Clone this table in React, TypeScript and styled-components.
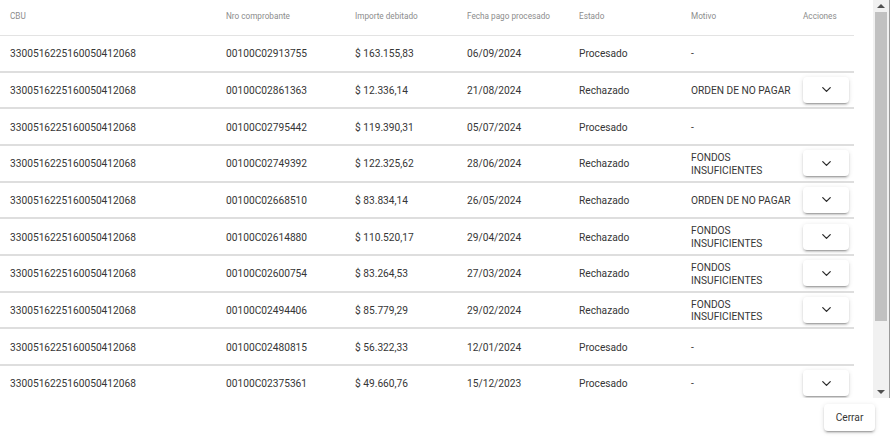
import React from 'react'
import styled, { createGlobalStyle } from 'styled-components'
import { ChevronDown } from 'lucide-react'

const GlobalStyle = createGlobalStyle`
  html, body {
    margin: 0;
    padding: 0;
    background: #fff;
  }

  body {
    font-family: Roboto, 'Liberation Sans', sans-serif;
  }
`

const Dialog = styled.div`
  width: 890px;
  height: 442px;
  display: flex;
  flex-direction: column;
  background: #fff;
  overflow: hidden;
`

const ScrollArea = styled.div`
  height: 398px;
  display: flex;
`

const TableWrap = styled.div`
  flex: 1;
  overflow: hidden;
`

const Table = styled.table`
  width: 854px;
  table-layout: fixed;
  border-collapse: separate;
  border-spacing: 0;
  color: #363636;
  font-size: 10.2px;
`

const HeadCell = styled.th<{ $w: number }>`
  box-sizing: border-box;
  width: ${({ $w }) => $w}px;
  height: 36px;
  padding: 0 0 3px 10px;
  text-align: left;
  font-weight: 400;
  font-size: 8.2px;
  color: #8c8c8c;
  border-bottom: 1px solid #e3e3e3;
  vertical-align: middle;
  white-space: nowrap;
`

const Cell = styled.td`
  box-sizing: border-box;
  height: 36.67px;
  padding: 3px 0 0 10px;
  line-height: 1.25;
  border-bottom: 2px solid #dedede;
  vertical-align: middle;
`

const ActionButton = styled.button`
  display: flex;
  align-items: center;
  justify-content: center;
  width: 46px;
  height: 26px;
  margin-top: -3px;
  padding: 0;
  border: 0;
  border-radius: 4px;
  background: #fff;
  color: #2a2a2a;
  cursor: pointer;
  box-shadow: 0px 3px 1px -2px rgba(0, 0, 0, 0.2),
    0px 2px 2px 0px rgba(0, 0, 0, 0.14), 0px 1px 5px 0px rgba(0, 0, 0, 0.12);
`

const ScrollTrack = styled.div`
  width: 16px;
  display: flex;
  flex-direction: column;
  background: #f1f1f1;
  border-right: 1px solid #9a9a9a;
`

const ArrowButton = styled.div<{ $up?: boolean }>`
  height: 12px;
  display: flex;
  align-items: center;
  justify-content: center;

  &::after {
    content: '';
    border-left: 4px solid transparent;
    border-right: 4px solid transparent;
    ${({ $up }) =>
      $up ? 'border-bottom: 4px solid #505050;' : 'border-top: 4px solid #505050;'}
  }
`

const Thumb = styled.div`
  height: 309px;
  margin: 0 2px;
  background: #c1c1c1;
`

const TrackRest = styled.div`
  flex: 1;
`

const Footer = styled.div`
  flex: 1;
  display: flex;
  justify-content: flex-end;
  align-items: flex-start;
  padding: 6px 15px 0 0;
`

const CloseButton = styled.button`
  width: 51px;
  height: 27px;
  border: 0;
  border-radius: 4px;
  background: #fff;
  color: #363636;
  font-family: Roboto, 'Liberation Sans', sans-serif;
  font-size: 10.2px;
  cursor: pointer;
  box-shadow: 0px 3px 1px -2px rgba(0, 0, 0, 0.2),
    0px 2px 2px 0px rgba(0, 0, 0, 0.14), 0px 1px 5px 0px rgba(0, 0, 0, 0.12);
`

const columns = [
  { label: 'CBU', w: 216 },
  { label: 'Nro comprobante', w: 129 },
  { label: 'Importe debitado', w: 112 },
  { label: 'Fecha pago procesado', w: 112 },
  { label: 'Estado', w: 112 },
  { label: 'Motivo', w: 112 },
  { label: 'Acciones', w: 61 },
]

const CBU = '3300516225160050412068'

// action = muestra el botón desplegable
const rows = [
  ['00100C02913755', '$ 163.155,83', '06/09/2024', 'Procesado', '-', false],
  ['00100C02861363', '$ 12.336,14', '21/08/2024', 'Rechazado', 'ORDEN DE NO PAGAR', true],
  ['00100C02795442', '$ 119.390,31', '05/07/2024', 'Procesado', '-', false],
  ['00100C02749392', '$ 122.325,62', '28/06/2024', 'Rechazado', 'FONDOS INSUFICIENTES', true],
  ['00100C02668510', '$ 83.834,14', '26/05/2024', 'Rechazado', 'ORDEN DE NO PAGAR', true],
  ['00100C02614880', '$ 110.520,17', '29/04/2024', 'Rechazado', 'FONDOS INSUFICIENTES', true],
  ['00100C02600754', '$ 83.264,53', '27/03/2024', 'Rechazado', 'FONDOS INSUFICIENTES', true],
  ['00100C02494406', '$ 85.779,29', '29/02/2024', 'Rechazado', 'FONDOS INSUFICIENTES', true],
  ['00100C02480815', '$ 56.322,33', '12/01/2024', 'Procesado', '-', false],
  ['00100C02375361', '$ 49.660,76', '15/12/2023', 'Procesado', '-', true],
] as const

const App = () => {
  return (
    <>
      <GlobalStyle />
      <Dialog>
        <ScrollArea>
          <TableWrap>
            <Table>
              <thead>
                <tr>
                  {columns.map((c) => (
                    <HeadCell key={c.label} $w={c.w}>
                      {c.label}
                    </HeadCell>
                  ))}
                </tr>
              </thead>
              <tbody>
                {rows.map(([nro, importe, fecha, estado, motivo, action]) => (
                  <tr key={nro}>
                    <Cell>{CBU}</Cell>
                    <Cell>{nro}</Cell>
                    <Cell>{importe}</Cell>
                    <Cell>{fecha}</Cell>
                    <Cell>{estado}</Cell>
                    <Cell>{motivo}</Cell>
                    <Cell>
                      {action && (
                        <ActionButton type="button">
                          <ChevronDown size={15} strokeWidth={2} />
                        </ActionButton>
                      )}
                    </Cell>
                  </tr>
                ))}
              </tbody>
            </Table>
          </TableWrap>
          <ScrollTrack>
            <ArrowButton $up />
            <Thumb />
            <TrackRest />
            <ArrowButton />
          </ScrollTrack>
        </ScrollArea>
        <Footer>
          <CloseButton type="button">Cerrar</CloseButton>
        </Footer>
      </Dialog>
    </>
  )
}

export default App
